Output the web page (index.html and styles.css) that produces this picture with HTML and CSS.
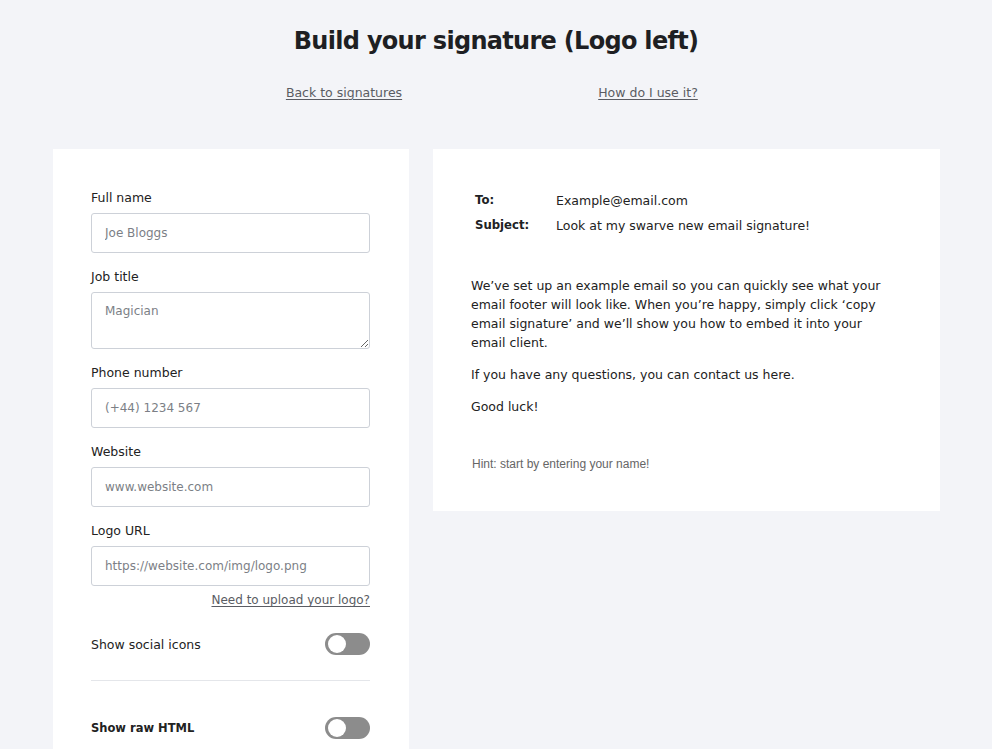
FILE: index.html
```html
<!DOCTYPE html>
<html lang="en">
<head>
<meta charset="utf-8">
<title>Build your signature</title>
<link rel="stylesheet" href="styles.css">
</head>
<body>
<header class="head">
  <h1 class="title">Build your signature (Logo left)</h1>
  <nav class="links">
    <a href="#" class="link">Back to signatures</a>
    <a href="#" class="link">How do I use it?</a>
  </nav>
</header>
<main class="cols">
  <section class="card form">
    <label class="field">
      <span class="lbl">Full name</span>
      <input class="inp" type="text" placeholder="Joe Bloggs">
    </label>
    <label class="field">
      <span class="lbl">Job title</span>
      <textarea class="inp area" placeholder="Magician"></textarea>
    </label>
    <label class="field">
      <span class="lbl">Phone number</span>
      <input class="inp" type="text" placeholder="(+44) 1234 567">
    </label>
    <label class="field">
      <span class="lbl">Website</span>
      <input class="inp" type="text" placeholder="www.website.com">
    </label>
    <label class="field">
      <span class="lbl">Logo URL</span>
      <input class="inp" type="text" placeholder="https://website.com/img/logo.png">
    </label>
    <div class="upload"><a href="#" class="link small">Need to upload your logo?</a></div>
    <div class="toggle-row social">
      <span class="tlabel">Show social icons</span>
      <span class="switch"><span class="knob"></span></span>
    </div>
    <hr class="divider">
    <div class="toggle-row raw">
      <span class="tlabel bold">Show raw HTML</span>
      <span class="switch"><span class="knob"></span></span>
    </div>
  </section>
  <section class="card preview">
    <div class="meta">
      <div class="mrow"><span class="mkey">To:</span><span class="mval">Example@email.com</span></div>
      <div class="mrow"><span class="mkey">Subject:</span><span class="mval">Look at my swarve new email signature!</span></div>
    </div>
    <div class="body">
      <p class="para">We’ve set up an example email so you can quickly see what your email footer will look like. When you’re happy, simply click ‘copy email signature’ and we’ll show you how to embed it into your email client.</p>
      <p class="para">If you have any questions, you can contact us here.</p>
      <p class="para">Good luck!</p>
    </div>
    <p class="hint">Hint: start by entering your name!</p>
  </section>
</main>
</body>
</html>
```

FILE: styles.css
```css
* { box-sizing: border-box; }
html, body { margin: 0; padding: 0; }
body {
  background: #f3f4f8;
  font-family: "DejaVu Sans", "Open Sans", sans-serif;
  color: #202124;
  height: 749px;
  overflow: hidden;
}
.head {
  display: flex;
  flex-direction: column;
  align-items: center;
  padding-top: 24px;
}
.title {
  margin: 0;
  font-size: 24px;
  font-weight: 700;
  line-height: 34px;
  color: #1e1f23;
  letter-spacing: -0.7px;
}
.links {
  display: grid;
  grid-template-columns: 304px 304px;
  justify-items: center;
  margin-top: 27px;
}
.link {
  color: #5a5c63;
  font-size: 12.5px;
  text-decoration: underline;
  text-underline-offset: 2px;
}
.cols {
  display: flex;
  gap: 24px;
  padding: 49px 0 0 53px;
  align-items: flex-start;
}
.card { background: #fff; }
.form {
  width: 356px;
  padding: 39px 39px 40px 38px;
  display: flex;
  flex-direction: column;
  height: 620px;
}
.field { display: flex; flex-direction: column; }
.lbl {
  font-size: 12.5px;
  line-height: 20px;
  color: #222;
  margin-bottom: 5px;
}
.field + .field { margin-top: 14px; }
.inp {
  width: 279px;
  height: 40px;
  border: 1px solid #cdd1d8;
  border-radius: 3px;
  padding: 0 13px;
  font-family: inherit;
  font-size: 12px;
  color: #333;
  background: #fff;
  outline: none;
}
.inp::placeholder { color: #7c7f86; }
.area {
  height: 57px;
  padding-top: 11px;
  resize: vertical;
}
.upload {
  display: flex;
  justify-content: flex-end;
  margin-top: 5px;
  line-height: 18px;
}
.small { font-size: 12px; }
.toggle-row {
  display: flex;
  justify-content: space-between;
  align-items: center;
}
.social { margin-top: 24px; }
.tlabel { font-size: 12.5px; color: #222; }
.bold { font-weight: 700; font-size: 11.5px; }
.switch {
  width: 45px;
  height: 22px;
  border-radius: 11px;
  background: #8c8c8c;
  position: relative;
  display: block;
}
.knob {
  position: absolute;
  left: 3px;
  top: 2px;
  width: 18px;
  height: 18px;
  border-radius: 50%;
  background: #fff;
}
.divider {
  border: 0;
  border-top: 1px solid #e4e6ea;
  margin: 25px 0 0;
  width: 279px;
}
.raw { margin-top: 36px; }
.preview {
  width: 507px;
  height: 362px;
  padding: 39px 50px 0 38px;
}
.meta { padding-left: 4px; }
.mrow { display: flex; font-size: 12.5px; line-height: 25px; }
.mkey { width: 81px; font-weight: 700; font-size: 11.7px; }
.mval { color: #222; }
.body { margin-top: 38px; }
.para {
  margin: 0 0 13px;
  font-size: 12.5px;
  line-height: 19px;
  color: #222;
}
.hint {
  margin: 41px 0 0 1px;
  font-family: "Liberation Sans", Arial, sans-serif;
  font-size: 12px;
  color: #666;
}
```
